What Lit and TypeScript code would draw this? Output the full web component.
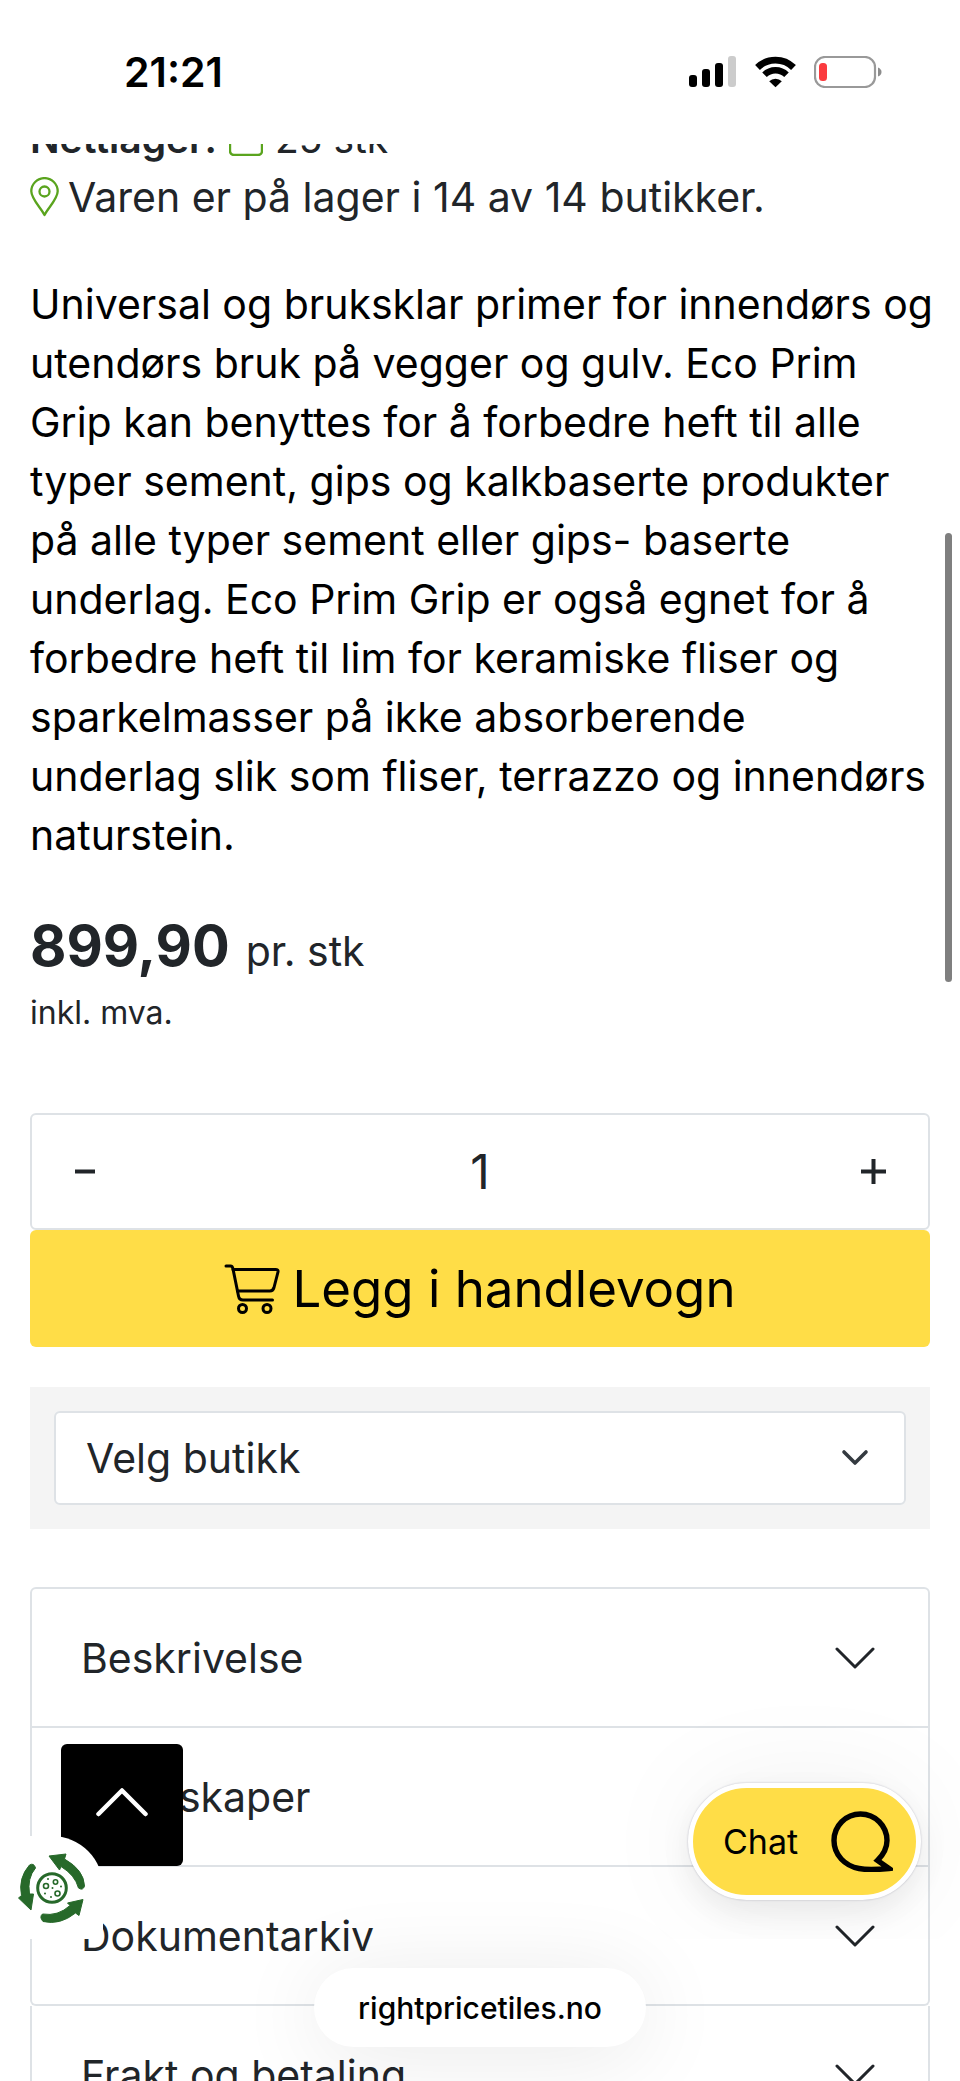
import { LitElement, html, css, svg } from "lit";
import { customElement, state } from "lit/decorators.js";

const chevron = svg`<path d="M2 2 L20 20 L38 2" fill="none" stroke="currentColor" stroke-width="3" stroke-linecap="round" stroke-linejoin="round"/>`;

@customElement("status-bar")
class StatusBar extends LitElement {
  static styles = css`
    :host {
      display: flex;
      justify-content: space-between;
      align-items: center;
      height: 144px;
      padding: 0 78px 0 124px;
      box-sizing: border-box;
      background: #fff;
      color: #000;
      font: 600 41px/41px Inter, sans-serif;
    }
    .icons { display: flex; align-items: center; gap: 18px; }
    svg { display: block; }
  `;
  render() {
    return html`
      <time>21:21</time>
      <div class="icons">
        <svg width="48" height="32" viewBox="0 0 48 32" aria-label="Signal">
          <rect x="0" y="19" width="8" height="12" rx="3" />
          <rect x="13" y="13" width="8" height="18" rx="3" />
          <rect x="26" y="7" width="8" height="24" rx="3" />
          <rect x="39" y="0" width="8" height="31" rx="3" fill="#ccc" />
        </svg>
        <svg width="41" height="32" viewBox="0 0 41 32" aria-label="Wi-Fi">
          <path d="M2.5 11.5 A25.500 25.500 0 0 1 38.500 11.500" fill="none" stroke="#000" stroke-width="6.8" />
          <path d="M9.5 18.8 A15.5 15.5 0 0 1 31.5 18.8" fill="none" stroke="#000" stroke-width="6.4" />
          <path d="M14.2 25.2 A9 9 0 0 1 26.8 25.2 L20.5 31.2 Z" />
        </svg>
        <svg width="68" height="32" viewBox="0 0 68 32" aria-label="Batteri">
          <rect x="1" y="1" width="60" height="30" rx="10" fill="none" stroke="#999" stroke-width="2.2" />
          <rect x="5" y="7" width="8" height="18" rx="3.5" fill="#fb3b3f" />
          <path d="M64 11.5 Q67.5 13 67.5 16 T64 20.5 Z" fill="#8c8c8c" />
        </svg>
      </div>
    `;
  }
}

@customElement("app-root")
class AppRoot extends LitElement {
  static styles = css`
    :host {
      display: block;
      position: relative;
      height: 100vh;
      overflow: hidden;
      background: #fff;
      color: #212529;
      font: 400 41px/58px Inter, sans-serif;
    }
    * { box-sizing: border-box; }
    button, input, select { font: inherit; color: inherit; margin: 0; }
    button { cursor: pointer; }
    svg { display: block; flex: none; }
    status-bar { position: relative; z-index: 2; }
    main { padding: 0 30px; margin-top: -34px; }
    .stock, .stores { display: flex; align-items: center; height: 58px; }
    .stock { gap: 12px; font-size: 39px; }
    .stock strong { font-weight: 600; }
    .stores { gap: 9px; }
    .green { color: #5aa41e; }
    .intro { margin: 49px 0 0; color: #000; line-height: 59px; white-space: nowrap; }
    .price { display: flex; align-items: baseline; gap: 16px; margin-top: 43px; line-height: 76px; }
    .price strong { font-size: 56px; font-weight: 700; }
    .vat { font-size: 32px; line-height: 48px; }
    .quantity {
      display: flex; align-items: stretch; height: 117px; margin-top: 76px;
      border: 2px solid #dee2e6; border-radius: 6px; background: #fff;
    }
    .step { width: 110px; padding: 0; border: 0; background: none; display: grid; place-items: center; }
    .amount { flex: 1; min-width: 0; border: 0; padding: 0; text-align: center; background: none; font-size: 48px; }
    .buy {
      display: flex; align-items: center; justify-content: center; gap: 12px;
      width: 100%; height: 117px; padding: 0; border: 0; border-radius: 6px;
      background: #ffdd47; color: #000; font-size: 51px;
    }
    .store { margin-top: 40px; padding: 24px; background: #f4f4f4; }
    .select { display: grid; align-items: center; }
    .select > * { grid-area: 1 / 1; }
    .select select {
      appearance: none; width: 100%; height: 94px; padding: 0 30px;
      border: 2px solid #dee2e6; border-radius: 6px; background: #fff;
    }
    .select svg { justify-self: end; margin-right: 37px; pointer-events: none; }
    .accordion { margin-top: 58px; }
    .item {
      display: flex; align-items: center; justify-content: space-between;
      width: 100%; height: 139px; padding: 0 53px 0 49px; text-align: left;
      border: 2px solid #dee2e6; border-width: 0 2px 2px; background: none;
    }
    .item:first-child { height: 141px; border-top-width: 2px; border-radius: 6px 6px 0 0; }
    .item.end { border-radius: 0 0 6px 6px; }
    .top {
      position: absolute; left: 61px; top: 1744px; width: 122px; height: 122px; padding: 0 0 6px;
      display: grid; place-items: center; border: 0; border-radius: 6px; background: #000; color: #fff;
    }
    .cookie {
      position: absolute; left: 0; top: 1836px; width: 103px; height: 103px; padding: 0 0 0 1px;
      display: grid; place-items: center; border: 0; border-radius: 0 51px 0 0; background: #fff;
    }
    .chat-frame {
      position: absolute; right: 0; top: 1640px; width: 420px; height: 299px; overflow: hidden; pointer-events: none;
      display: flex; align-items: flex-end; justify-content: flex-end; padding: 0 39px 39px 0;
    }
    .chat {
      display: flex; align-items: center; justify-content: space-between; pointer-events: auto;
      width: 233px; height: 117px; padding: 0 23px 0 30px; border: 5px solid #fff; border-radius: 60px;
      background: #ffdd47; color: #000; font: 400 34px/40px Inter, sans-serif;
      box-shadow: 0 0 2px rgba(40, 40, 80, 0.3), 0 12px 30px rgba(0, 0, 0, 0.07), 0 0 110px rgba(0, 0, 0, 0.06);
    }
    .address {
      position: absolute; left: 50%; top: 1968px; transform: translateX(-50%);
      width: 332px; height: 79px; border-radius: 40px; background: #fff; color: #000;
      display: grid; place-items: center; text-decoration: none; font-size: 30px; font-weight: 500;
      box-shadow: 0 8px 90px rgba(0, 0, 0, 0.09);
    }
    .thumb { position: absolute; right: 8px; top: 533px; width: 7px; height: 449px; border-radius: 4px; background: #7f7f7f; }
  `;

  @state() private amount = 1;

  render() {
    const items = ["Beskrivelse", "Egenskaper", "Dokumentarkiv", "Frakt og betaling"];
    return html`
      <status-bar></status-bar>
      <main>
        <div class="stock">
          <strong>Nettlager:</strong>
          <svg class="green" width="34" height="34" viewBox="0 0 34 34"><rect x="1" y="1" width="32" height="32" rx="4" fill="none" stroke="currentColor" stroke-width="2.4" /></svg>
          <span>25 stk</span>
        </div>
        <div class="stores">
          <svg class="green" width="29" height="40" viewBox="0 0 29 40" fill="none" stroke="currentColor" stroke-width="2.3">
            <path d="M14.5 38 C11 31 1.3 22 1.3 14.3 A13.2 13.2 0 0 1 27.700 14.300 C27.700 22 18 31 14.500 38 Z" stroke-linejoin="round" />
            <circle cx="14.500" cy="14.500" r="5" />
          </svg>
          <span>Varen er på lager i 14 av 14 butikker.</span>
        </div>
        <p class="intro">
          Universal og bruksklar primer for innendørs og<br />
          utendørs bruk på vegger og gulv. Eco Prim<br />
          Grip kan benyttes for å forbedre heft til alle<br />
          typer sement, gips og kalkbaserte produkter<br />
          på alle typer sement eller gips- baserte<br />
          underlag. Eco Prim Grip er også egnet for å<br />
          forbedre heft til lim for keramiske fliser og<br />
          sparkelmasser på ikke absorberende<br />
          underlag slik som fliser, terrazzo og innendørs<br />
          naturstein.
        </p>
        <div class="price"><strong>899,90</strong><span>pr. stk</span></div>
        <div class="vat">inkl. mva.</div>
        <div class="quantity">
          <button class="step" aria-label="Færre" @click=${() => (this.amount = Math.max(1, this.amount - 1))}>
            <svg width="25" height="25" viewBox="0 0 25 25"><path d="M0 12.500 H20" stroke="currentColor" stroke-width="4" /></svg>
          </button>
          <input class="amount" aria-label="Antall" inputmode="numeric" .value=${String(this.amount)} />
          <button class="step" aria-label="Flere" @click=${() => (this.amount += 1)}>
            <svg width="25" height="25" viewBox="0 0 25 25"><path d="M0 12.500 H25 M12.500 0 V25" stroke="currentColor" stroke-width="4" /></svg>
          </button>
        </div>
        <button class="buy">
          <svg width="56" height="50" viewBox="0 0 56 50" fill="none" stroke="currentColor" stroke-width="3" stroke-linecap="round" stroke-linejoin="round">
            <path d="M2 2 H6.500 Q8.500 2 9 5 L14.500 32 Q15.200 36 19 36 H48.500" />
            <path d="M9 5.500 H51.500 Q54.500 5.500 54 8 L50 23.500 Q49 27 46 27 H13.500" />
            <circle cx="18.500" cy="44.500" r="4" /><circle cx="43" cy="44.500" r="4" />
          </svg>
          <span>Legg i handlevogn</span>
        </button>
        <div class="store">
          <div class="select">
            <select aria-label="Velg butikk"><option>Velg butikk</option></select>
            <svg width="28" height="18" viewBox="0 0 28 18"><path d="M3 3 L14 14 L25 3" fill="none" stroke="#343a40" stroke-width="3.600" stroke-linecap="round" stroke-linejoin="round" /></svg>
          </div>
        </div>
        <div class="accordion">
          ${items.map((name, i) => html`
            <button class="item ${i === 2 ? "end" : ""}" aria-expanded="false">
              <span>${name}</span>
              <svg width="40" height="22" viewBox="0 0 40 22">${chevron}</svg>
            </button>`)}
        </div>
      </main>
      <div class="thumb"></div>
      <button class="top" aria-label="Til toppen">
        <svg width="52" height="30" viewBox="0 0 52 30"><path d="M2.500 27 L26 3.500 L49.500 27" fill="none" stroke="currentColor" stroke-width="4.500" stroke-linecap="round" stroke-linejoin="round" /></svg>
      </button>
      <button class="cookie" aria-label="Informasjonskapsler">
        <svg width="68" height="70" viewBox="0 0 68 70" fill="#27692a" stroke="#27692a">
          <path d="M31 3 L48 1 L46.500 6 Q66 17 66.500 33 Q65 38 60.500 35 Q57 22 43 13.500 L41.500 17 Z" stroke-width="1" stroke-linejoin="round" />
          <path d="M11.500 12 Q16 9.500 17.500 15 Q9 25 11.500 41 L15.500 41 L13 57 L0.500 45 L3.500 42.500 Q0 25 11.500 12 Z" stroke-width="1" stroke-linejoin="round" />
          <path d="M24.500 61 Q40 63.500 52 52.500 L49.500 50 L65 46.500 L61 62.500 L57.500 60 Q42 72.500 25 68.500 Q21 64 24.500 61 Z" stroke-width="1" stroke-linejoin="round" />
          <circle cx="34" cy="35" r="14.300" fill="none" stroke-width="3" />
          <g fill="none" stroke-width="1.600">
            <circle cx="28" cy="33" r="2.500" /><circle cx="37.500" cy="29" r="2.200" /><circle cx="39.500" cy="40.500" r="2.500" />
          </g>
          <g stroke="none">
            <circle cx="30" cy="26" r="1" /><circle cx="34.500" cy="35" r="1" /><circle cx="43" cy="33.500" r="1" /><circle cx="27" cy="40.500" r="1" /><circle cx="33" cy="44" r="1" />
          </g>
        </svg>
      </button>
      <div class="chat-frame">
        <button class="chat">
          <span>Chat</span>
          <svg width="62" height="62" viewBox="0 0 62 62">
            <path d="M58 57.500 C49 58.300 36 59 28 57.500 C14 55 3 44 3 29.500 A26.500 26.500 0 0 1 56 29.500 C56 38 52 44 46.500 49.500 Z" fill="none" stroke="#000" stroke-width="5.400" />
          </svg>
        </button>
      </div>
      <a class="address" href="#">rightpricetiles.no</a>
    `;
  }
}
